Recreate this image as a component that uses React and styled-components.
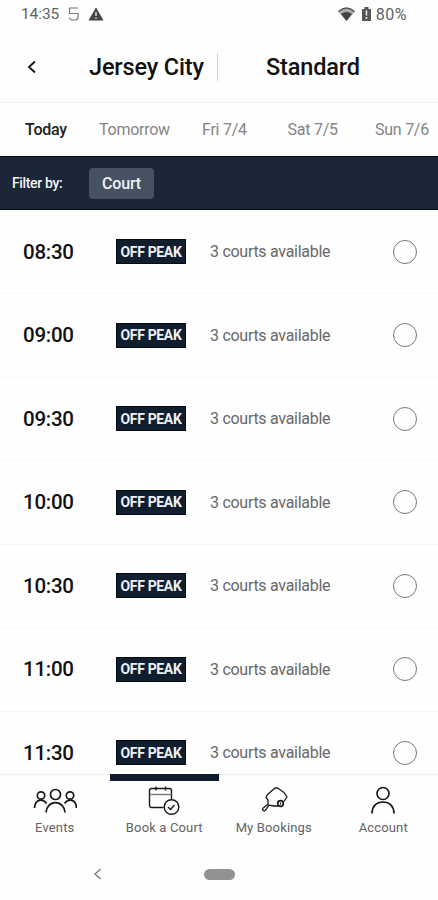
import React from "react";
import styled, { createGlobalStyle } from "styled-components";

const GlobalStyle = createGlobalStyle`
  * {
    box-sizing: border-box;
  }
  body {
    margin: 0;
    background: #fefefe;
    font-family: Roboto, sans-serif;
  }
`;

const Screen = styled.div`
  display: flex;
  flex-direction: column;
  width: 438px;
  height: 900px;
  overflow: hidden;
  color: #111;

  > * {
    flex: none;
  }
`;

const StatusBar = styled.div`
  display: flex;
  justify-content: space-between;
  align-items: center;
  height: 28px;
  padding: 0 31px 0 21px;
  font-size: 15.5px;
  letter-spacing: -0.1px;
  color: #626262;
`;

const StatusGroup = styled.div`
  display: flex;
  align-items: center;
  gap: ${(props) => props.$gap}px;
`;

const Percent = styled.span`
  margin-left: -2px;
  font-size: 16px;
  letter-spacing: 0.5px;
`;

const Header = styled.header`
  display: grid;
  grid-template-columns: 76px 141px 1px 1fr;
  align-items: center;
  height: 75px;
  padding-top: 4px;
  border-bottom: 1px solid #f3f3f3;
`;

const BackButton = styled.button`
  display: flex;
  padding: 0 0 0 27px;
  border: 0;
  background: none;
`;

const Title = styled.h1`
  margin: 0;
  padding-left: ${(props) => props.$indent}px;
  font-size: 23.5px;
  font-weight: 500;
  letter-spacing: -0.15px;
  white-space: nowrap;
`;

const Divider = styled.span`
  height: 28px;
  background: #d4d4d4;
`;

const Days = styled.nav`
  display: flex;
  align-items: center;
  height: 53px;
  padding-left: 25px;
`;

const Day = styled.span`
  flex: none;
  width: ${(props) => props.$width}px;
  font-size: 16px;
  font-weight: ${(props) => (props.$active ? 500 : 400)};
  letter-spacing: -0.25px;
  color: ${(props) => (props.$active ? "#222" : "#848484")};
  white-space: nowrap;
`;

const FilterBar = styled.div`
  display: flex;
  align-items: center;
  height: 54px;
  padding-left: 12px;
  border-top: 1px solid #070d15;
  border-bottom: 1px solid #070d15;
  background: #1b2737;
  color: #f3f4f6;
`;

const FilterLabel = styled.span`
  width: 77px;
  font-size: 14px;
  font-weight: 500;
  letter-spacing: -0.35px;
`;

const FilterChip = styled.button`
  width: 65px;
  height: 31px;
  padding: 0;
  border: 0;
  border-radius: 4px;
  background: #465261;
  color: #eef1f5;
  font: 500 16px Roboto, sans-serif;
  letter-spacing: -0.2px;
`;

const SlotList = styled.ul`
  height: 564px;
  margin: 0;
  padding: 0.5px 0 0;
  overflow: hidden;
  list-style: none;
`;

const Slot = styled.li`
  display: grid;
  grid-template-columns: 93px 94px 183px 24px;
  align-items: center;
  height: 83.5px;
  padding-left: 23px;
  border-bottom: 1px solid #f8f8f8;
`;

const Time = styled.span`
  font-size: 20.5px;
  font-weight: 500;
  letter-spacing: -0.25px;
`;

const Badge = styled.span`
  display: flex;
  align-items: center;
  justify-content: center;
  width: 70px;
  height: 25px;
  border: 1px solid #060c16;
  background: #111e2e;
  color: #edf0f4;
  font-size: 14px;
  font-weight: 700;
  letter-spacing: -0.35px;
  white-space: nowrap;
`;

const Availability = styled.span`
  font-size: 16px;
  letter-spacing: -0.28px;
  color: #686868;
`;

const Radio = styled.span`
  width: 24px;
  height: 24px;
  border: 1px solid #777;
  border-radius: 50%;
`;

const TabBar = styled.nav`
  display: grid;
  grid-template-columns: repeat(4, 1fr);
  height: 72px;
`;

const Tab = styled.a`
  display: flex;
  flex-direction: column;
  align-items: center;
  border-top: ${(props) => (props.$active ? "7px solid #101c2d" : "1px solid #ededed")};
  padding-top: ${(props) => (props.$active ? 4 : 10)}px;
  font-size: 13px;
  letter-spacing: 0.15px;
  color: #636363;
  white-space: nowrap;

  svg {
    margin-bottom: 5px;
  }
`;

const SystemNav = styled.div`
  display: flex;
  align-items: center;
  height: 54px;
  padding: 2px 0 0 93px;
`;

const HomePill = styled.span`
  width: 31px;
  height: 11px;
  margin-left: 102px;
  border-radius: 6px;
  background: #929292;
`;

const Icon = ({ width, height, children, stroke = "#181818", strokeWidth = 1.5 }) => (
  <svg
    width={width}
    height={height}
    viewBox={`0 0 ${width} ${height}`}
    fill="none"
    stroke={stroke}
    strokeWidth={strokeWidth}
  >
    {children}
  </svg>
);

const EventsIcon = () => (
  <Icon width={44} height={30} strokeWidth={1.7}>
    <circle cx="22.5" cy="9.5" r="5" />
    <circle cx="8" cy="10.5" r="3.7" />
    <circle cx="37" cy="10.5" r="3.7" />
    <path d="M13 27.5a9.5 9.8 0 0 1 19 0" />
    <path d="M1.5 23c.3-5 3-7.8 6.500-7.800 2.200 0 4 1.300 5.500 3.300M43.500 23c-.3-5-3-7.800-6.500-7.800-2.200 0-4 1.300-5.500 3.300" />
  </Icon>
);

const CourtIcon = () => (
  <Icon width={32} height={30} strokeWidth={1.4}>
    <path d="M15.5 22.5H3.5a2 2 0 0 1-2-2V5.5a2 2 0 0 1 2-2h18a2 2 0 0 1 2 2V15" />
    <path d="M1.5 9.5h22" stroke="#777" />
    <path d="M8 1.5v4M17.5 1.5v4" />
    <circle cx="23.5" cy="22" r="7.3" />
    <path d="m20 22 2.5 2.5 4-4.5" />
  </Icon>
);

const BookingsIcon = () => (
  <Icon width={28} height={30} strokeWidth={1.3}>
    <path
      d="M18 21h-4l-5-.8-3.500 5a1.600 1.600 0 0 1-2.600-1.900L8 19.200V15l-2-2.500 1.500-3L15 3h2.500l6.500 4.500 3 4.500-3 4.500"
      strokeLinejoin="round"
    />
    <circle cx="20.500" cy="18.500" r="2.800" strokeWidth="1.700" />
    <path d="M20.500 17.500v2" />
  </Icon>
);

const AccountIcon = () => (
  <Icon width={26} height={30} strokeWidth={1.7}>
    <circle cx="13" cy="8.5" r="6" />
    <path d="M2 28.5C2.200 21 6.500 17 13 17s10.800 4 11 11.500" />
  </Icon>
);

const days = [
  { label: "Today", width: 74 },
  { label: "Tomorrow", width: 103 },
  { label: "Fri 7/4", width: 85.5 },
  { label: "Sat 7/5", width: 87.5 },
  { label: "Sun 7/6", width: 60 },
];

const times = ["08:30", "09:00", "09:30", "10:00", "10:30", "11:00", "11:30"];

const tabs = [
  { label: "Events", icon: EventsIcon },
  { label: "Book a Court", icon: CourtIcon },
  { label: "My Bookings", icon: BookingsIcon },
  { label: "Account", icon: AccountIcon },
];

const App = () => {
  return (
    <>
      <GlobalStyle />
      <Screen>
        <StatusBar>
          <StatusGroup $gap={9}>
            <span>14:35</span>
            <Icon width={11} height={14} stroke="#777" strokeWidth={1.2}>
              <path d="M10 1H1.5v5.500H10V10a3 3 0 0 1-3 3H4.500a3 3 0 0 1-3-2.500" />
            </Icon>
            <Icon width={16} height={14} stroke="none">
              <path d="M8 .5 15.500 13.500H.5z" fill="#444" />
              <path d="M8 5v4M8 10.500v1.500" stroke="#eee" strokeWidth="1.3" />
            </Icon>
          </StatusGroup>
          <StatusGroup $gap={7}>
            <Icon width={17} height={14} stroke="none">
              <path d="M0 4.500Q8.500-3 17 4.500L8.500 14z" fill="#aaa" />
              <path d="M3 7Q8.500 3 14 7L8.500 14z" fill="#444" />
              <path d="M.5 4.500Q8.500-2.500 16.500 4.500" stroke="#555" />
            </Icon>
            <Icon width={9} height={14} stroke="none">
              <path d="M0 2h2.500V0h4v2H9v12H0z" fill="#555" />
              <path d="M4.500 3.500v5M4.500 10v2" stroke="#eee" strokeWidth="1.5" />
            </Icon>
            <Percent>80%</Percent>
          </StatusGroup>
        </StatusBar>
        <Header>
          <BackButton aria-label="Back">
            <Icon width={9} height={14} stroke="#111" strokeWidth={1.8}>
              <path d="m8 1.500-6 5.500 6 5.500" />
            </Icon>
          </BackButton>
          <Title $indent={13}>Jersey City</Title>
          <Divider />
          <Title $indent={48}>Standard</Title>
        </Header>
        <Days>
          {days.map((day, index) => (
            <Day key={day.label} $width={day.width} $active={index === 0}>
              {day.label}
            </Day>
          ))}
        </Days>
        <FilterBar>
          <FilterLabel>Filter by:</FilterLabel>
          <FilterChip>Court</FilterChip>
        </FilterBar>
        <SlotList>
          {times.map((time) => (
            <Slot key={time}>
              <Time>{time}</Time>
              <Badge>OFF PEAK</Badge>
              <Availability>3 courts available</Availability>
              <Radio />
            </Slot>
          ))}
        </SlotList>
        <TabBar>
          {tabs.map(({ label, icon: TabIcon }) => (
            <Tab key={label} $active={label === "Book a Court"}>
              <TabIcon />
              {label}
            </Tab>
          ))}
        </TabBar>
        <SystemNav>
          <Icon width={9} height={12} stroke="#777" strokeWidth={1.3}>
            <path d="M7.500 1 2 6l5.500 5" />
          </Icon>
          <HomePill />
        </SystemNav>
      </Screen>
    </>
  );
};

export default App;
